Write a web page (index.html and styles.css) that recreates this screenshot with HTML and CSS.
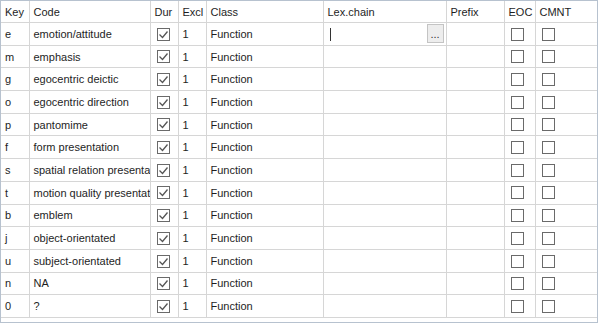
FILE: index.html
```html
<!DOCTYPE html>
<html lang="en">
<head>
<meta charset="UTF-8">
<title>Codes</title>
<link rel="stylesheet" href="styles.css">
</head>
<body>
<div id="grid">
    <table class="codes">
        <colgroup>
            <col class="c-key"><col class="c-code"><col class="c-dur"><col class="c-excl"><col class="c-class">
            <col class="c-lex"><col class="c-prefix"><col class="c-eoc"><col class="c-cmnt">
        </colgroup>
        <thead>
            <tr>
                <th>Key</th><th>Code</th><th>Dur</th><th>Excl</th><th>Class</th>
                <th>Lex.chain</th><th>Prefix</th><th>EOC</th><th>CMNT</th>
            </tr>
        </thead>
        <tbody id="rows"></tbody>
    </table>
</div>

<script>
const codes = [
    ['e', 'emotion/attitude'],
    ['m', 'emphasis'],
    ['g', 'egocentric deictic'],
    ['o', 'egocentric direction'],
    ['p', 'pantomime'],
    ['f', 'form presentation'],
    ['s', 'spatial relation presentation'],
    ['t', 'motion quality presentation'],
    ['b', 'emblem'],
    ['j', 'object-orientated'],
    ['u', 'subject-orientated'],
    ['n', 'NA'],
    ['0', '?']
];

const checked = '<span class="box"><svg viewBox="0 0 13 13" width="13" height="13"><path d="M2.5 6.5 L5.5 9.5 L10.5 3.5" fill="none" stroke="#555" stroke-width="1.3"/></svg></span>';
const empty = '<span class="box"></span>';

const tbody = document.getElementById('rows');
codes.forEach(function (c, i) {
    const tr = document.createElement('tr');
    // first row has the lexical chain editor open
    const lex = i === 0
        ? '<td class="editing"><span class="caret"></span><span class="more">...</span></td>'
        : '<td></td>';
    tr.innerHTML = `
        <td>${c[0]}</td>
        <td class="clip">${c[1]}</td>
        <td class="chk">${checked}</td>
        <td>1</td>
        <td>Function</td>
        ${lex}
        <td></td>
        <td class="chk">${empty}</td>
        <td class="chk">${empty}</td>
    `;
    tbody.appendChild(tr);
});
</script>
</body>
</html>
```

FILE: styles.css
```css
body {
    margin: 0;
    padding: 0;
    background-color: #fff;
    font-family: "Liberation Sans", Arial, sans-serif;
    font-size: 11px;
    color: #1e1e1e;
}
#grid {
    width: 596px;
    height: 321px;
    border: 1px solid #b7c2cf;
    background-color: #fff;
    overflow: hidden;
}
.codes {
    table-layout: fixed;
    border-collapse: collapse;
    width: 596px;
}
.c-key { width: 28px; }
.c-code { width: 121px; }
.c-dur { width: 28px; }
.c-excl { width: 28px; }
.c-class { width: 117px; }
.c-lex { width: 123px; }
.c-prefix { width: 58px; }
.c-eoc { width: 31px; }
.c-cmnt { width: 62px; }
th, td {
    border: 1px solid #d6d6d6;
    padding: 0 4px;
    text-align: left;
    white-space: nowrap;
    overflow: hidden;
}
th {
    height: 21px;
    font-weight: normal;
    background-color: #fff;
    border-top: none;
}
td {
    height: 21.7px;
}
tr > :first-child {
    border-left: none;
}
tr > :last-child {
    border-right: none;
}
.clip {
    text-overflow: clip;
}
.chk {
    padding: 0 6px;
}
.box {
    display: inline-block;
    width: 13px;
    height: 13px;
    border: 1px solid #6a6a6a;
    box-sizing: border-box;
    vertical-align: middle;
    position: relative;
}
.box svg {
    position: absolute;
    left: -1px;
    top: -1px;
}
.editing {
    position: relative;
}
.caret {
    display: inline-block;
    width: 1px;
    height: 13px;
    background-color: #333;
    vertical-align: middle;
    margin-left: 2px;
}
.more {
    position: absolute;
    right: 2px;
    top: 1px;
    width: 17px;
    height: 19px;
    border: 1px solid #c4c4c4;
    background-color: #ededed;
    box-sizing: border-box;
    font-size: 11px;
    line-height: 19px;
    text-align: center;
    color: #333;
}
```
